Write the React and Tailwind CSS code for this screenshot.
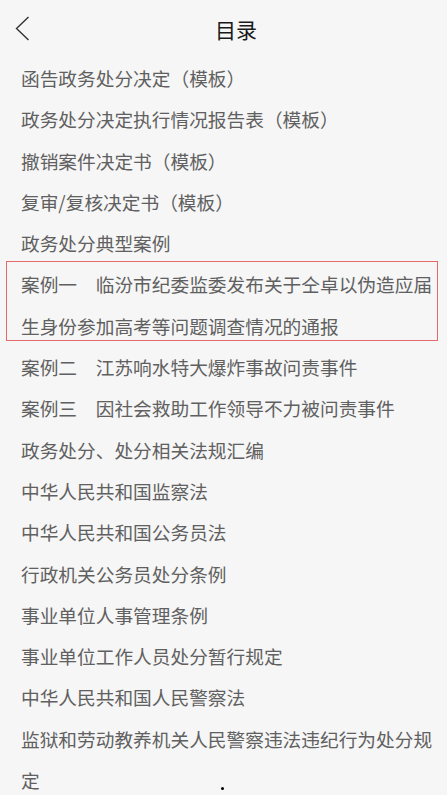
const items = [
  '函告政务处分决定（模板）',
  '政务处分决定执行情况报告表（模板）',
  '撤销案件决定书（模板）',
  '复审/复核决定书（模板）',
  '政务处分典型案例',
  '案例一　临汾市纪委监委发布关于仝卓以伪造应届生身份参加高考等问题调查情况的通报',
  '案例二　江苏响水特大爆炸事故问责事件',
  '案例三　因社会救助工作领导不力被问责事件',
  '政务处分、处分相关法规汇编',
  '中华人民共和国监察法',
  '中华人民共和国公务员法',
  '行政机关公务员处分条例',
  '事业单位人事管理条例',
  '事业单位工作人员处分暂行规定',
  '中华人民共和国人民警察法',
  '监狱和劳动教养机关人民警察违法违纪行为处分规定',
];

// index of the entry that is outlined in red
const marked = 5;

const BackArrow = () => (
  <svg width="15" height="25" viewBox="0 0 15 25" fill="none">
    <path d="M13.5 1 L1.5 12.5 L13.5 24" stroke="#333" strokeWidth="1.4" />
  </svg>
);

export default function App() {
  return (
    <div
      className="relative h-[795px] overflow-hidden bg-[#f6f6f6]"
      style={{ fontFamily: '"Noto Sans CJK SC", "Noto Sans", sans-serif' }}
    >
      {/* 顶部栏 */}
      <div className="flex h-[57px] items-center pl-[15px] pr-[5px]">
        <BackArrow />
        <div className="flex-1 pt-[2px] text-center text-[21px] text-[#1a1a1a]">目录</div>
      </div>

      {/* 目录列表 */}
      <ul className="pl-[21px] pr-[12px] text-[18.7px] leading-[41.3px] text-[#606060]">
        {items.map((t, i) => (
          <li key={i} className="relative">
            {i === marked && (
              <span className="pointer-events-none absolute -left-[15px] -right-[3px] -top-[2px] bottom-[5px] border border-[#e46a6a]" />
            )}
            {t}
          </li>
        ))}
      </ul>

      <span className="absolute left-[221px] top-[787px] h-[3px] w-[3px] rounded-full bg-black" />
    </div>
  );
}
